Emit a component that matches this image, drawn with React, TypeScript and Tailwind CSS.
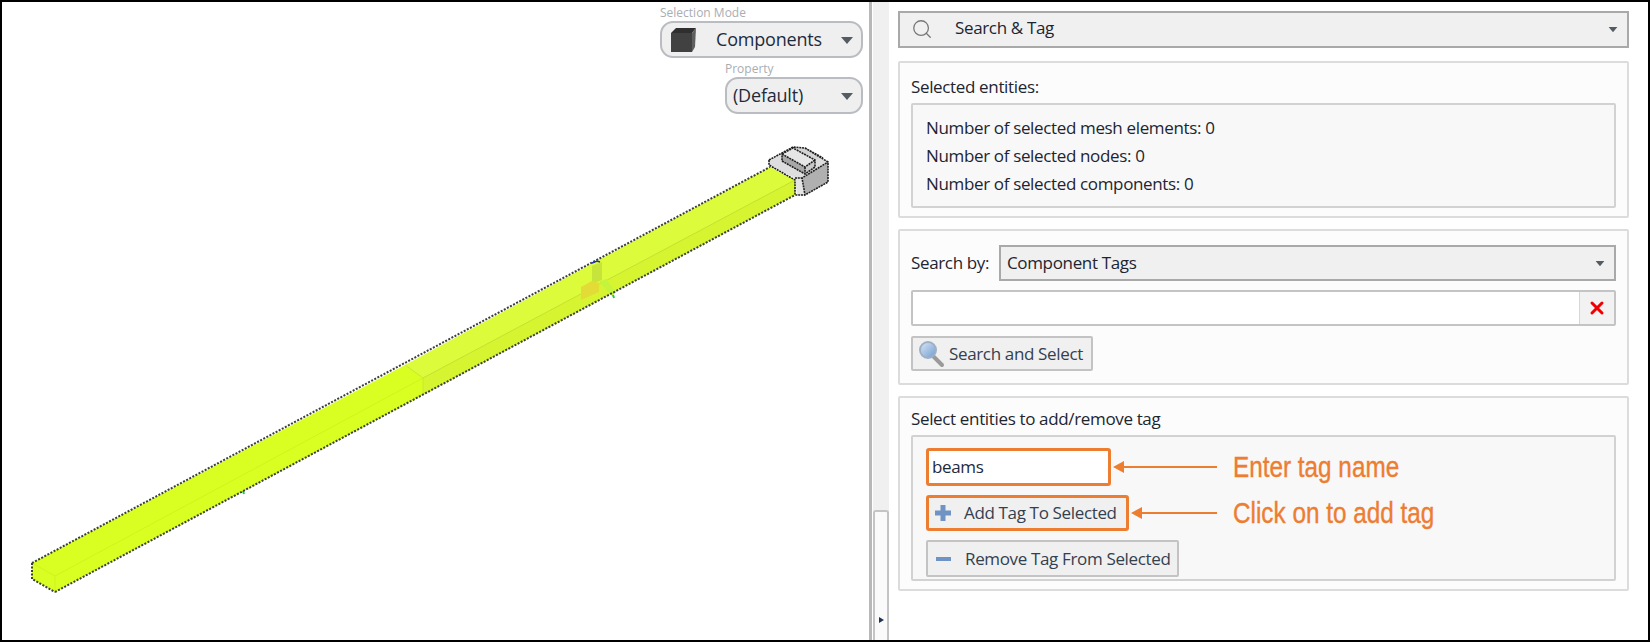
import { Search, X } from "lucide-react";

const counts = [
  "Number of selected mesh elements: 0",
  "Number of selected nodes: 0",
  "Number of selected components: 0",
];

function Caret({ className }: { className?: string }) {
  return (
    <svg width="12" height="7" viewBox="0 0 12 7" className={className}>
      <path d="M0 0h12L6 7z" fill="#555b63" />
    </svg>
  );
}

function Arrow({ width }: { width: number }) {
  return (
    <svg width={width} height="14" viewBox={`0 0 ${width} 14`} className="shrink-0">
      <path d={`M10 7H${width}`} stroke="#ed7d31" strokeWidth="2" />
      <path d="M0 7l11-6v12z" fill="#ed7d31" />
    </svg>
  );
}

function Callout({ children }: { children: React.ReactNode }) {
  return (
    <span className="ml-[16px] origin-left scale-x-[0.81] whitespace-nowrap font-['Liberation_Sans',sans-serif] text-[30px] leading-none tracking-normal text-[#ed7d31] [-webkit-text-stroke:0.4px_#ed7d31]">
      {children}
    </span>
  );
}

function Beam() {
  return (
    <svg viewBox="0 0 867 638" className="block h-full w-full">
      {/* beam, two sections */}
      <polygon points="30,561 403,363 421,376 421,393 53,590 30,577" fill="#d9ff22" />
      <polygon points="403,363 768,165 793,178 421,376" fill="#dcfb3a" />
      <polygon points="421,376 793,178 793,193 421,393" fill="#d6f530" />
      <path d="M421,376L793,178" stroke="#c4e02a" strokeWidth="1" fill="none" />
      <path d="M403,363L421,376V393" stroke="#c9e62c" strokeWidth="1" fill="none" />
      <path d="M30,561L53,574V590M53,574L421,376" stroke="#d0f21e" strokeWidth="1" fill="none" />
      {/* little tee in the middle */}
      <polygon points="590,264 600,260 600,278 590,282" fill="#c6e43a" />
      <polygon points="579,285 590,279 597,281 597,290 579,298" fill="#e3dc36" />
      <polygon points="597,280 604,277 614,290 610,294" fill="#c4f53c" />
      <path d="M590,261l5-2 3,1" stroke="#2230d0" strokeWidth="1.5" fill="none" />
      <path d="M611,293l1,3" stroke="#12d040" strokeWidth="2" fill="none" />
      <path d="M241,489l1,3" stroke="#12d040" strokeWidth="2" fill="none" />
      {/* dotted mesh edges */}
      <path d="M30,561L768,165M53,590L793,193M30,561V577L53,590" stroke="#3a3f3a" strokeWidth="2" strokeDasharray="2 1.5" fill="none" />
      {/* end block, drawn in page coordinates */}
      <g transform="translate(-2 -2)">
        <polygon points="769,160 793,147 805,148 828,162 802,178 795,178 769,165" fill="#dedede" />
        <polygon points="802,178 828,162 828,182 805,195" fill="#b0b0b0" />
        <polygon points="795,178 802,178 805,195 797,195" fill="#e4e4e4" />
        <polygon points="793,148 805,148 823,158 815,160" fill="#d4d4d4" />
        <polygon points="782,154 793,148 815,160 805,167" fill="#e6e6e6" />
        <polygon points="782,154 805,167 805,174 782,161" fill="#a8a8a8" />
        <polygon points="805,167 815,160 815,167 805,174" fill="#c8c8c8" />
        <path
          d="M769,160L793,147L805,148L828,162V182L805,195L802,178L828,162M769,160V165L795,180V195H805M795,178H802M782,154L793,148L815,160V167L805,174L782,161ZM782,154L805,167L815,160M805,167V174M805,148L823,158"
          stroke="#1f1f1f"
          strokeWidth="1.6"
          strokeDasharray="2 0.8"
          fill="none"
        />
      </g>
    </svg>
  );
}

function ViewDropdown({ children, className }: { children: React.ReactNode; className: string }) {
  return (
    <div className={`absolute flex items-center rounded-[13px] border-2 border-[#b9bcc0] bg-[#efefef] text-[18px] tracking-[-0.2px] text-[#1e2b3c] ${className}`}>
      {children}
      <Caret className="absolute right-[8px] top-[14px]" />
    </div>
  );
}

function GroupBox({ className, children }: { className: string; children: React.ReactNode }) {
  return (
    <section className={`rounded-[2px] border-2 border-[#dcdcdc] bg-[#fcfcfc] px-[11px] ${className}`}>
      {children}
    </section>
  );
}

function ToolButton({ icon, label, className }: { icon: React.ReactNode; label: string; className: string }) {
  return (
    <div className={`flex items-center rounded-[2px] border-2 border-[#c3c3c3] bg-[#f0f0f0] text-[#33404f] ${className}`}>
      {icon}
      <span className="whitespace-nowrap">{label}</span>
    </div>
  );
}

export default function App() {
  return (
    <div className="flex h-[642px] w-[1650px] overflow-hidden border-2 border-black bg-white font-['Open_Sans',sans-serif] text-[17px] tracking-[-0.35px] text-[#1c2530]">
      {/* 3D viewport */}
      <div className="relative w-[867px] shrink-0">
        <Beam />
        <span className="absolute left-[658px] top-[2px] text-[12px] tracking-normal text-[#a9adb2]">Selection Mode</span>
        <ViewDropdown className="left-[658px] top-[19px] h-[37px] w-[203px] pl-[8px]">
          <svg width="27" height="26" viewBox="0 0 27 26" className="mr-[19px] shrink-0">
            <polygon points="1,6 6,1 26,1 22,6" fill="#2f2f2f" />
            <polygon points="22,6 26,1 25,20 22,25" fill="#5f5f5f" />
            <rect x="1" y="6" width="21" height="19" fill="#414141" />
          </svg>
          Components
        </ViewDropdown>
        <span className="absolute left-[723px] top-[58px] text-[12px] tracking-normal text-[#a9adb2]">Property</span>
        <ViewDropdown className="left-[723px] top-[75px] h-[37px] w-[138px] pl-[6px]">(Default)</ViewDropdown>
      </div>

      {/* Splitter + scrollbar strip */}
      <div className="flex w-[20px] shrink-0 border-l-[3px] border-[#b8b8b8] bg-white pl-[1px]">
        <div className="flex w-[16px] flex-col bg-[#f0f0f0]">
          <div className="mt-auto flex h-[130px] items-end justify-center rounded-t-[3px] border-2 border-b-0 border-[#c4c4c4] bg-[#fafafa] pb-[17px]">
            <svg width="5" height="6" viewBox="0 0 5 6">
              <path d="M0 0l5 3-5 3z" fill="#1e3350" />
            </svg>
          </div>
        </div>
      </div>

      {/* Search & Tag panel */}
      <div className="flex w-[740px] shrink-0 flex-col pl-[9px] pt-[9px]">
        <div className="flex h-[37px] w-[731px] items-center border-2 border-[#a9a9a9] bg-[#f0f0f0] pl-[11px] pr-[8px]">
          <Search size={22} strokeWidth={1.4} className="mr-[22px] -mt-[2px] text-[#777]" />
          <span className="-mt-[3px]">Search &amp; Tag</span>
          <Caret className="ml-auto scale-75" />
        </div>

        <GroupBox className="mt-[13px] h-[157px] w-[731px] pt-[14px]">
          <div className="leading-[20px]">Selected entities:</div>
          <div className="mt-[6px] flex h-[105px] flex-col justify-center gap-[8px] rounded-[2px] border-2 border-[#d2d2d2] bg-[#f8f8f8] pl-[13px]">
            {counts.map((c) => (
              <div key={c} className="leading-[20px]">{c}</div>
            ))}
          </div>
        </GroupBox>

        <GroupBox className="mt-[11px] h-[156px] w-[731px] pt-[14px]">
          <div className="flex items-center">
            <span className="w-[88px]">Search by:</span>
            <div className="flex h-[36px] flex-1 items-center border-2 border-[#a9a9a9] bg-[#f0f0f0] pl-[6px] pr-[8px]">
              <span>Component Tags</span>
              <Caret className="ml-auto scale-75" />
            </div>
          </div>
          <div className="mt-[9px] flex h-[36px] rounded-[2px] border-2 border-[#c4c4c4] bg-white">
            <div className="flex-1" />
            <div className="flex w-[35px] items-center justify-center border-l border-[#d6d6d6] bg-[#f2f2f2]">
              <X size={20} strokeWidth={3.6} className="text-[#f00000]" />
            </div>
          </div>
          <ToolButton
            className="mt-[10px] h-[35px] w-[182px] pl-[5px]"
            label="Search and Select"
            icon={
              <svg width="27" height="28" viewBox="0 0 27 28" className="mr-[4px] shrink-0">
                <defs>
                  <linearGradient id="glass" x1="0" y1="0" x2="1" y2="1">
                    <stop offset="0" stopColor="#dbe8f7" />
                    <stop offset="1" stopColor="#6f9bd0" />
                  </linearGradient>
                </defs>
                <path d="M15 16l9 9" stroke="#9a9a9a" strokeWidth="4" strokeLinecap="round" />
                <circle cx="10" cy="10" r="8" fill="url(#glass)" stroke="#9fb0c4" strokeWidth="2" />
              </svg>
            }
          />
        </GroupBox>

        <GroupBox className="mt-[11px] h-[195px] w-[731px] pt-[11px]">
          <div className="leading-[20px]">Select entities to add/remove tag</div>
          <div className="mt-[6px] flex h-[146px] flex-col rounded-[2px] border-2 border-[#d2d2d2] bg-[#f8f8f8] pl-[13px] pt-[11px]">
            <div className="flex items-center">
              <div className="flex h-[38px] w-[185px] items-center rounded-[3px] border-[3px] border-[#ed7d31] bg-white pl-[3px] text-[#1e2b3c]">
                beams
              </div>
              <div className="ml-[2px] flex"><Arrow width={104} /></div>
              <Callout>Enter tag name</Callout>
            </div>
            <div className="mt-[9px] flex items-center">
              <ToolButton
                className="h-[36px] w-[203px] rounded-[3px] border-[3px] border-[#ed7d31] pl-[6px]"
                label="Add Tag To Selected"
                icon={
                  <svg width="16" height="16" viewBox="0 0 16 16" className="mr-[13px] shrink-0">
                    <path d="M8 0v16M0 8h16" stroke="#6f94c4" strokeWidth="5" />
                  </svg>
                }
              />
              <div className="ml-[2px] flex"><Arrow width={86} /></div>
              <Callout>Click on to add tag</Callout>
            </div>
            <ToolButton
              className="mt-[9px] h-[37px] w-[253px] pl-[8px]"
              label="Remove Tag From Selected"
              icon={<span className="mr-[14px] h-[4px] w-[15px] shrink-0 bg-[#6f94c4]" />}
            />
          </div>
        </GroupBox>
      </div>
    </div>
  );
}
